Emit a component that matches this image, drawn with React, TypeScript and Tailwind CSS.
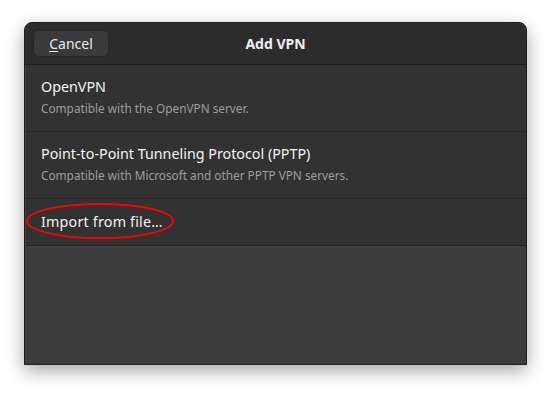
import React from 'react';

const font = { fontFamily: '"Noto Sans", "DejaVu Sans", sans-serif' };

type Row = { title: string; subtitle?: string };

const rows: Row[] = [
  { title: 'OpenVPN', subtitle: 'Compatible with the OpenVPN server.' },
  {
    title: 'Point-to-Point Tunneling Protocol (PPTP)',
    subtitle: 'Compatible with Microsoft and other PPTP VPN servers.',
  },
];

export default function App() {
  return (
    <div className="w-[552px] h-[393px] bg-white pt-[22px] pl-[24px]" style={font}>
      <div className="w-[503px] h-[343px] flex flex-col rounded-t-[8px] border border-[#1f1f1f] bg-[#3d3d3d] shadow-[0_6px_18px_rgba(0,0,0,0.35)] overflow-hidden">
        {/* ==================== HEADER ==================== */}
        <div className="relative h-[42px] shrink-0 flex items-center bg-[#2c2c2c] border-b border-[#1e1e1e] px-[8px]">
          <button className="w-[76px] h-[27px] rounded-[5px] bg-[#3a3a3a] border border-[#262626] text-[14px] text-[#e8e8e8]">
            <span className="underline underline-offset-2">C</span>ancel
          </button>
          <div className="absolute inset-0 flex items-center justify-center pointer-events-none">
            <span className="text-[14px] font-bold text-[#f0f0f0]">Add VPN</span>
          </div>
        </div>

        {/* ==================== LIST ==================== */}
        <div className="relative bg-[#323232] border-b border-[#242424] ml-[1px]">
          {rows.map((r) => (
            <div key={r.title} className="h-[67px] px-[15px] pt-[12px] border-b border-[#282828]">
              <div className="text-[14.3px] leading-[20px] text-[#f2f2f2]">{r.title}</div>
              <div className="text-[11.8px] leading-[18px] mt-[2px] text-[#9c9c9c]">{r.subtitle}</div>
            </div>
          ))}
          <div className="h-[46px] px-[15px] flex items-center">
            <span className="text-[14.3px] tracking-[0.2px] text-[#f2f2f2]">Import from file…</span>
          </div>

          <svg className="absolute left-[0px] top-[137px]" width="150" height="40" viewBox="0 0 150 40">
            <ellipse cx="74" cy="19" rx="73" ry="17" fill="none" stroke="#ff0000" strokeWidth="1.8" />
          </svg>
        </div>
      </div>
    </div>
  );
}
